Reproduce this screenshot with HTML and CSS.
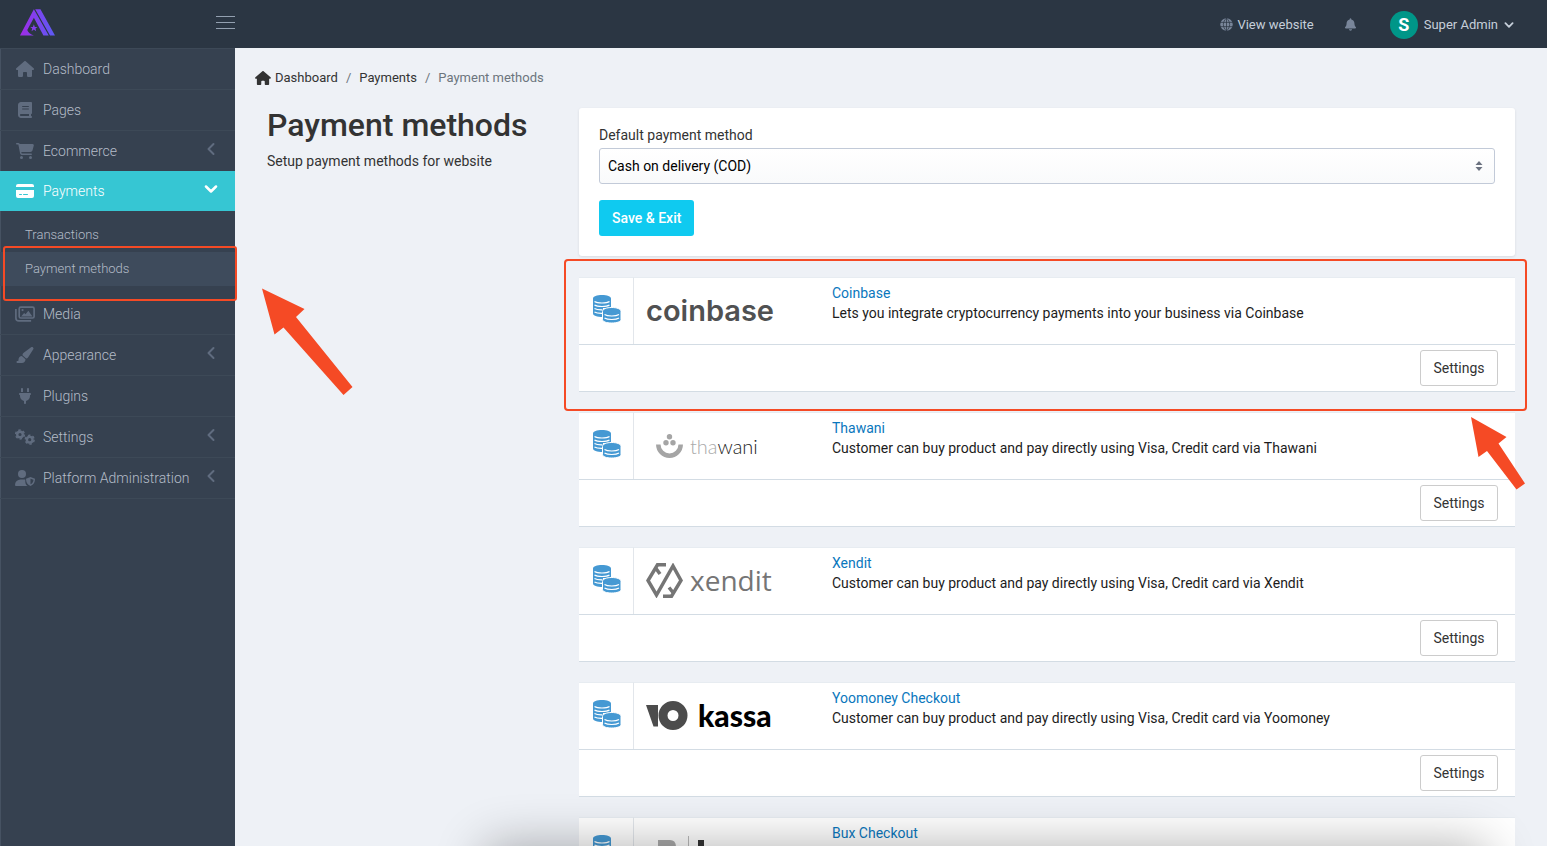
FILE: index.html
```html
<!DOCTYPE html>
<html lang="en">
<head>
<meta charset="utf-8">
<title>Payment methods</title>
<link rel="stylesheet" href="styles.css">
</head>
<body>
<svg class="defs" aria-hidden="true">
  <symbol id="house" viewBox="0 0 576 512"><path d="M575.8 255.500c0 18-15 32.100-32 32.100l-32 0 .7 160.200v24.300c0 22.100-17.900 40-40 40H392c-22.100 0-40-17.900-40-40v-88c0-17.700-14.300-32-32-32h-64c-17.700 0-32 14.300-32 32v88c0 22.100-17.900 40-40 40h-80c-22.100 0-40-17.900-40-40V287.600H32c-18 0-32-14-32-32.100 0-9 3-17 10-24L266.400 8c7-7 15-8 22-8s15 2 21 7l255.400 224.500c8 7 12 15 11 24z"/></symbol>
  <symbol id="book" viewBox="0 0 448 512"><path d="M96 0C43 0 0 43 0 96v320c0 53 43 96 96 96h320c17.700 0 32-14.300 32-32s-14.300-32-32-32v-64c17.700 0 32-14.300 32-32V32c0-17.700-14.300-32-32-32H96zm0 384h256v64H96c-17.700 0-32-14.300-32-32s14.300-32 32-32zm32-240c0-8.800 7.200-16 16-16h192c8.800 0 16 7.200 16 16s-7.200 16-16 16H144c-8.800 0-16-7.200-16-16zm16 64h192c8.800 0 16 7.200 16 16s-7.200 16-16 16H144c-8.800 0-16-7.200-16-16s7.200-16 16-16z"/></symbol>
  <symbol id="cart" viewBox="0 0 576 512"><path d="M0 24C0 10.700 10.700 0 24 0h45.500c22 0 41.500 12.800 50.600 32h411c26.300 0 45.500 25 38.600 50.400l-41 152.300c-8.500 31.400-37 53.300-69.500 53.300H170.700l5.400 28.500c2.200 11.300 12.100 19.500 23.600 19.500H488c13.300 0 24 10.700 24 24s-10.700 24-24 24H199.700c-34.600 0-64.300-24.600-70.700-58.500L77.400 54.500c-.7-3.800-4-6.500-7.900-6.500H24C10.700 48 0 37.300 0 24zM128 464a48 48 0 1 1 96 0 48 48 0 1 1-96 0zm336-48a48 48 0 1 1 0 96 48 48 0 1 1 0-96z"/></symbol>
  <symbol id="card" viewBox="0 0 18 14"><path fill-rule="evenodd" d="M2 0h14a2 2 0 0 1 2 2v1H0V2a2 2 0 0 1 2-2zM0 6h18v6a2 2 0 0 1-2 2H2a2 2 0 0 1-2-2zM3.500 10a.5.5 0 0 0 0 1h2a.5.5 0 0 0 0-1zm4 0a.5.5 0 0 0 0 1h4a.5.5 0 0 0 0-1z"/></symbol>
  <symbol id="images" viewBox="0 0 18 14"><path fill="none" stroke="currentColor" stroke-width="1.500" d="M5.200.8h10.600a1.400 1.400 0 0 1 1.400 1.400v7a1.400 1.400 0 0 1-1.400 1.400H5.200a1.400 1.400 0 0 1-1.400-1.400v-7A1.400 1.400 0 0 1 5.200.8zM.8 2.500v8a2.700 2.700 0 0 0 2.700 2.700h11"/><circle cx="6.800" cy="3.500" r="1"/><path d="M5.500 9.200 8.200 6l1.300 1.200L12 4l3.700 5.200z"/></symbol>
  <symbol id="brush" viewBox="32 0 544 512"><path d="M339.300 367.100c27.300-3.900 51.900-19.400 67.200-42.900L568.200 74.100c12.600-19.500 9.400-45.300-7.600-61.200S517.700-4.400 499.100 9.600L262.400 187.200c-24 18-38.200 46.100-38.400 76.100zm-19.600 25.400l-116-104.400C143.900 290.300 96 339.600 96 400c0 3.900.2 7.800.6 11.600C98.400 429.100 86.400 448 68.800 448H64c-17.700 0-32 14.300-32 32s14.300 32 32 32h144c61.900 0 112-50.100 112-112z"/></symbol>
  <symbol id="plug" viewBox="0 0 384 512"><path d="M96 0C78.300 0 64 14.300 64 32v96h64V32c0-17.700-14.300-32-32-32zm192 0c-17.700 0-32 14.300-32 32v96h64V32c0-17.700-14.300-32-32-32zM32 160c-17.700 0-32 14.300-32 32s14.300 32 32 32v32c0 77.400 55 142 128 156.800V480c0 17.700 14.300 32 32 32s32-14.300 32-32v-67.200C297 398 352 333.400 352 256v-32c17.700 0 32-14.300 32-32s-14.300-32-32-32z"/></symbol>
  <symbol id="gears" viewBox="0 0 20 16"><g fill="none" stroke="currentColor"><circle cx="5" cy="5.500" r="2.800" stroke-width="2.400"/><circle cx="5" cy="5.500" r="4.400" stroke-width="1.500" stroke-dasharray="2.500 2.108"/><circle cx="14.700" cy="10.700" r="2.800" stroke-width="2.400"/><circle cx="14.700" cy="10.700" r="4.400" stroke-width="1.500" stroke-dasharray="2.500 2.108"/></g></symbol>
  <symbol id="usershield" viewBox="0 0 20 16"><circle cx="7" cy="4" r="4"/><path d="M5.500 9.500h4.800v2c0 2 .8 3.500 2.200 4.500H1a1 1 0 0 1-1-1 5.500 5.500 0 0 1 5.500-5.500z"/><path fill-rule="evenodd" d="M15.500 7 20 8.700c0 3.500-1.200 6-4.500 7.300-3.300-1.300-4.500-3.800-4.500-7.300zm0 1.700v5.600c2.200-1 2.900-2.600 3-4.500z"/></symbol>
  <symbol id="globe" viewBox="0 0 14 14"><circle cx="7" cy="7" r="6.700"/><path fill="none" stroke="#2b3643" stroke-width=".8" d="M0 4.700h14M0 9.300h14M7 0v14M7 .2C2.500 4 2.500 10 7 13.800M7 .2c4.500 3.800 4.500 9.800 0 13.600"/></symbol>
  <symbol id="bell" viewBox="0 0 448 512"><path d="M224 0c-17.700 0-32 14.300-32 32v19.200C119 66 64 130.600 64 208v18.800c0 47-17.300 92.400-48.500 127.600l-7.400 8.300c-8.400 9.400-10.400 22.900-5.300 34.400S19.400 416 32 416h384c12.600 0 24-7.400 29.200-18.900s3.100-25-5.300-34.400l-7.400-8.300C401.300 319.200 384 273.900 384 226.800V208c0-77.400-55-142-128-156.800V32c0-17.700-14.300-32-32-32zm45.300 493.300c12-12 18.700-28.300 18.700-45.300H160c0 17 6.700 33.300 18.700 45.300s28.300 18.700 45.300 18.700 33.300-6.700 45.300-18.700z"/></symbol>
  <symbol id="left" viewBox="0 0 8 14"><path fill="none" stroke="currentColor" stroke-width="2" stroke-linecap="round" stroke-linejoin="round" d="M6.500 2 1.500 7l5 5"/></symbol>
  <symbol id="down" viewBox="0 0 14 8"><path fill="none" stroke="currentColor" stroke-width="2.500" stroke-linecap="round" stroke-linejoin="round" d="M2 1.500l5 5 5-5"/></symbol>
  <symbol id="coins" viewBox="0 0 28 28"><path d="M0 3.500C0 1.300 4 0 9 0s9 1.300 9 3.500V13H10v9C4 22 0 20.700 0 18.500z"/><g fill="none" stroke="#fff" stroke-width="1.200"><path d="M1.500 6.500c3 2 12 2 15 0M1.500 10c3 2 12 2 15 0M1.500 13.500c2 1.200 5 1.400 8 1.300M1.500 17c2 1.200 5 1.400 8 1.300"/></g><path stroke="#fff" stroke-width="1" d="M9.500 16.500c0-2.500 4-4 9.200-4s9.300 1.500 9.300 4v8c0 2.200-4 3.500-9.300 3.500s-9.200-1.300-9.200-3.500z"/><path fill="none" stroke="#fff" stroke-width="1.200" d="M11.500 19.500c3 2 11.500 2 14.500 0M11.500 23c3 2 11.500 2 14.500 0"/></symbol>
</svg>

<header class="topbar">
  <div class="brand">
    <a href="#" aria-label="Home"><svg class="logo" viewBox="60 27 106 81"><defs><linearGradient id="lg" x1="0" y1="0" x2="1" y2="0"><stop offset="0" stop-color="#a02be6"/><stop offset="1" stop-color="#5b5cf5"/></linearGradient></defs><path fill="url(#lg)" d="M60 107 102 27l45 80h-16L102 53 82 90q4 11 20 17zM106 27h16l44 80h-15zM102 73l3 8h8l-6 5 2 8-7-5-7 5 2-8-6-5h8z"/></svg></a>
    <button class="burger" aria-label="Toggle menu"><span></span><span></span><span></span></button>
  </div>
  <nav class="tools">
    <a href="#" class="site"><svg><use href="#globe"/></svg>View website</a>
    <button class="bell" aria-label="Notifications"><svg><use href="#bell"/></svg></button>
    <button class="user"><span class="avatar">S</span>Super Admin<svg><use href="#down"/></svg></button>
  </nav>
</header>

<div class="shell">
  <nav class="sidebar">
    <ul class="menu">
      <li><a href="#"><svg><use href="#house"/></svg><span>Dashboard</span></a></li>
      <li><a href="#"><svg><use href="#book"/></svg><span>Pages</span></a></li>
      <li><a href="#"><svg><use href="#cart"/></svg><span>Ecommerce</span><svg class="chev"><use href="#left"/></svg></a></li>
      <li class="active"><a href="#"><svg><use href="#card"/></svg><span>Payments</span><svg class="chev"><use href="#down"/></svg></a>
        <ul class="sub">
          <li><a href="#">Transactions</a></li>
          <li class="current"><a href="#">Payment methods</a>
            <svg class="arrow-menu" viewBox="261 287 93 110"><path d="M262 288.500 304.500 309l-8.500 8 56.500 70-9 8-60-67.500-9 7z"/></svg>
          </li>
        </ul>
      </li>
      <li class="plain"><a href="#"><svg><use href="#images"/></svg><span>Media</span></a></li>
      <li><a href="#"><svg><use href="#brush"/></svg><span>Appearance</span><svg class="chev"><use href="#left"/></svg></a></li>
      <li><a href="#"><svg><use href="#plug"/></svg><span>Plugins</span></a></li>
      <li><a href="#"><svg><use href="#gears"/></svg><span>Settings</span><svg class="chev"><use href="#left"/></svg></a></li>
      <li><a href="#"><svg><use href="#usershield"/></svg><span>Platform Administration</span><svg class="chev"><use href="#left"/></svg></a></li>
    </ul>
  </nav>

  <main class="main">
    <ol class="crumbs">
      <li><a href="#"><svg><use href="#house"/></svg>Dashboard</a></li>
      <li><a href="#">Payments</a></li>
      <li>Payment methods</li>
    </ol>
    <div class="columns">
      <section class="intro">
        <h1>Payment methods</h1>
        <p>Setup payment methods for website</p>
      </section>
      <div class="content">
        <form class="card">
          <label for="default">Default payment method</label>
          <div class="select"><select id="default"><option>Cash on delivery (COD)</option></select><svg viewBox="0 0 8 10"><path d="M4 0l3.500 4h-7zM.5 6h7L4 10z"/></svg></div>
          <button type="button" class="save">Save &amp; Exit</button>
        </form>

        <div class="method marked">
          <table>
            <tr class="info"><td class="ico"><svg><use href="#coins"/></svg></td><td class="mark"><span class="coinbase">coinbase</span></td><td class="desc"><a href="#">Coinbase</a><p>Lets you integrate cryptocurrency payments into your business via Coinbase</p></td></tr>
            <tr class="foot"><td colspan="3"><button>Settings</button></td></tr>
          </table>
          <svg class="arrow-card" viewBox="1470 416 57 75"><path d="M1471 417l35.500 20-8 6.500 26.500 40-8.500 6L1487 451l-8.500 6z"/></svg>
        </div>

        <div class="method">
          <table>
            <tr class="info"><td class="ico"><svg><use href="#coins"/></svg></td><td class="mark"><span class="thawani"><svg viewBox="0 0 27 24"><path fill="none" stroke="#a5a5a5" stroke-width="4.500" d="M2.300 10.500a11.200 11.200 0 0 0 22.400 0"/><g fill="#a5a5a5"><circle cx="13.500" cy="2.700" r="2.700"/><circle cx="10" cy="8.800" r="2.700"/><circle cx="17" cy="8.800" r="2.700"/></g></svg><b><i>tha</i>wani</b></span></td><td class="desc"><a href="#">Thawani</a><p>Customer can buy product and pay directly using Visa, Credit card via Thawani</p></td></tr>
            <tr class="foot"><td colspan="3"><button>Settings</button></td></tr>
          </table>
        </div>

        <div class="method">
          <table>
            <tr class="info"><td class="ico"><svg><use href="#coins"/></svg></td><td class="mark"><span class="xendit"><svg viewBox="0 0 37 35"><g fill="none" stroke="#757575" stroke-width="3.500"><path d="M20 1.800h-8.500L2 17.500l8.500 14.500L27 3l8 14.500-9.500 15.700H17M10 5.500l4 5.500M27 29.500l-4-5"/></g></svg>xendit</span></td><td class="desc"><a href="#">Xendit</a><p>Customer can buy product and pay directly using Visa, Credit card via Xendit</p></td></tr>
            <tr class="foot"><td colspan="3"><button>Settings</button></td></tr>
          </table>
        </div>

        <div class="method">
          <table>
            <tr class="info"><td class="ico"><svg><use href="#coins"/></svg></td><td class="mark"><span class="kassa"><svg viewBox="0 0 42 29"><path fill="#4c4c4c" d="M0 4h12v21.500H7.500z"/><circle cx="27" cy="14.500" r="10" fill="none" stroke="#4c4c4c" stroke-width="9"/></svg>kassa</span></td><td class="desc"><a href="#">Yoomoney Checkout</a><p>Customer can buy product and pay directly using Visa, Credit card via Yoomoney</p></td></tr>
            <tr class="foot"><td colspan="3"><button>Settings</button></td></tr>
          </table>
        </div>

        <div class="method">
          <table>
            <tr class="info"><td class="ico"><svg><use href="#coins"/></svg></td><td class="mark"><span class="bux"><svg viewBox="0 0 50 30"><path fill="#aaa" d="M0 4h12q6 0 6 7v19H0z"/><path fill="#bbb" d="M30 0h1v30h-1z"/><path fill="#333" d="M40 4h6v26h-6z"/></svg></span></td><td class="desc"><a href="#">Bux Checkout</a></td></tr>
          </table>
        </div>
      </div>
    </div>
  </main>
</div>
<div class="shade"></div>
</body>
</html>
```
FILE: styles.css
```css
* { box-sizing: border-box; }
body { margin: 0; height: 100vh; display: flex; flex-direction: column; overflow: hidden; background: #eef1f6; color: #333; font: 14px/20px Roboto, "Liberation Sans", sans-serif; }
ul, ol { list-style: none; margin: 0; padding: 0; }
a { color: inherit; text-decoration: none; }
button, select { font: inherit; color: inherit; background: none; border: 0; padding: 0; cursor: pointer; }
svg { display: block; fill: currentColor; flex: none; }
.defs { position: absolute; width: 0; height: 0; }

.topbar { flex: none; height: 48px; background: #2b3643; display: flex; justify-content: space-between; color: #c6cfda; font-size: 13px; }
.brand { width: 235px; padding: 9px 0 0 20px; display: flex; justify-content: space-between; align-items: flex-start; }
.logo { width: 35px; height: 27px; }
.burger { margin-top: 7px; width: 19px; display: grid; gap: 5px; }
.burger span { height: 1px; background: #93a0b0; }
.tools { display: flex; align-items: center; padding: 1px 33px 0 0; }
.site { display: flex; align-items: center; gap: 4px; }
.site svg { width: 13px; height: 13px; color: #79869a; }
.bell { margin: 0 34px 0 31px; }
.bell svg { width: 11px; height: 13px; color: #79869a; }
.user { display: flex; align-items: center; gap: 6px; }
.user svg { width: 10px; height: 6px; }
.avatar { width: 28px; height: 28px; border-radius: 50%; background: #009688; color: #fff; font: 700 18px/28px Roboto, sans-serif; }

.shell { flex: 1; min-height: 0; display: flex; }
.sidebar { position: relative; z-index: 2; flex: none; width: 235px; background: #364150; box-shadow: inset 1px 0 #465262; color: #b4bcc8; font-weight: 300; }
.menu > li { border-top: 1px solid #3d4957; }
.menu > li:last-child { border-bottom: 1px solid #3d4957; }
.menu > li.active, .menu > li.plain { border-top: 0; }
.menu > li > a { display: flex; align-items: center; gap: 8px; height: 40px; padding: 0 17px 0 15px; }
.menu > li > a > svg { width: 20px; height: 16px; color: #606c7f; }
.menu > li > a > span { flex: 1; white-space: nowrap; }
.menu > li > a > .chev { width: 14px; height: 14px; margin-bottom: 4px; }
.menu > .active > a { background: #36c6d3; color: #fff; }
.menu > .active > a > svg { height: 14px; color: #fff; }
.menu > .active > a > .chev { height: 8px; }
.sub { padding: 7px 0 8px; }
.sub a { display: block; height: 34px; padding: 0 25px; font-size: 13px; line-height: 34px; }
.current { position: relative; background: #3e4b5c; }
.current::after { content: ""; position: absolute; inset: -6px -2px -15px 3px; border: 2px solid #f54a25; border-radius: 3px; pointer-events: none; }
.arrow-menu { position: absolute; left: 261px; top: 35px; width: 93px; height: 110px; color: #f54a25; }

.main { flex: 1; min-width: 0; padding: 20px 32px 0; overflow: hidden; }
.crumbs { display: flex; margin-left: -12px; font-size: 13px; color: #6c757d; }
.crumbs a { display: flex; align-items: center; gap: 4px; color: #333; }
.crumbs svg { width: 16px; height: 14px; }
.crumbs li { display: flex; }
.crumbs li + li::before { content: "/"; padding: 0 8px; }
.columns { display: grid; grid-template-columns: 1fr 3fr; margin-top: 20px; }
h1 { margin: 0 0 9px; font-size: 32px; line-height: 34px; font-weight: 500; }
.intro p { margin: 0; }
.card { background: #fff; border-radius: 3px; box-shadow: 0 1px 3px #00000018; padding: 17px 20px 20px; }
.card label { display: block; margin-bottom: 3px; }
.select { position: relative; }
.select select { appearance: none; width: 100%; height: 36px; padding: 0 8px; border: 1px solid #c2cad8; border-radius: 3px; background: linear-gradient(#fff, #f9fafb); color: #000; display: block; }
.select svg { position: absolute; right: 12px; top: 13px; width: 8px; height: 10px; color: #6b7280; pointer-events: none; }
.save { display: block; margin-top: 16px; height: 36px; padding: 0 13px; border-radius: 3px; background: #0fcaf0; color: #fff; font-weight: 500; }

.method { position: relative; margin-top: 20px; }
.card + .method { margin-top: 21px; }
.method table { width: 100%; border-spacing: 0; background: #fff; }
.method td { padding: 0; }
.info { height: 67px; }
.info td { border-top: 1px solid #e7ecf1; }
.info .ico { width: 55px; border-right: 1px solid #e2e6eb; padding: 0 12px 4px 14px; }
.ico svg { width: 28px; height: 28px; color: #4599d3; }
.info .mark { width: 198px; padding-left: 12px; }
.info .desc { vertical-align: top; padding-top: 5px; color: #1c1c1c; }
.desc a { color: #0a77bd; }
.desc p { margin: 0; }
.foot td { height: 48px; border: solid #d3dce4; border-width: 1px 0; padding: 5px 17px 5px 0; }
.foot button { display: block; margin-left: auto; height: 36px; min-width: 78px; padding: 0 12px; border: 1px solid #ccc; border-radius: 3px; background: #fff; }
.marked { z-index: 1; }
.marked::after { content: ""; position: absolute; inset: -18px -12px -19px -15px; border: 2px solid #f54a25; border-radius: 4px; pointer-events: none; }
.arrow-card { position: absolute; right: -12px; top: 139px; width: 57px; height: 75px; color: #f54a25; }

.mark span { display: flex; align-items: center; }
.mark .coinbase { font: 600 29px/32px Inter, sans-serif; color: #505152; }
.mark .thawani { gap: 7px; padding-left: 10px; font: 300 20px/24px Lato, sans-serif; color: #222; }
.thawani svg { width: 27px; height: 24px; }
.thawani b { font-weight: 300; }
.thawani i { font-style: normal; color: #aaa; }
.mark .xendit { gap: 7px; padding-bottom: 2px; font: 400 28px/36px "Open Sans", sans-serif; color: #757575; }
.xendit svg { width: 37px; height: 35px; }
.mark .kassa { gap: 10px; padding-bottom: 2px; font: 900 30px/30px Lato, sans-serif; color: #000; }
.kassa svg { width: 42px; height: 29px; }
.mark .bux { padding-left: 12px; }
.bux svg { width: 50px; height: 30px; }

.shade { position: fixed; z-index: 3; top: 100%; left: 485px; right: 60px; height: 80px; border-radius: 10px; box-shadow: 0 0 50px #00000050; pointer-events: none; }
```
